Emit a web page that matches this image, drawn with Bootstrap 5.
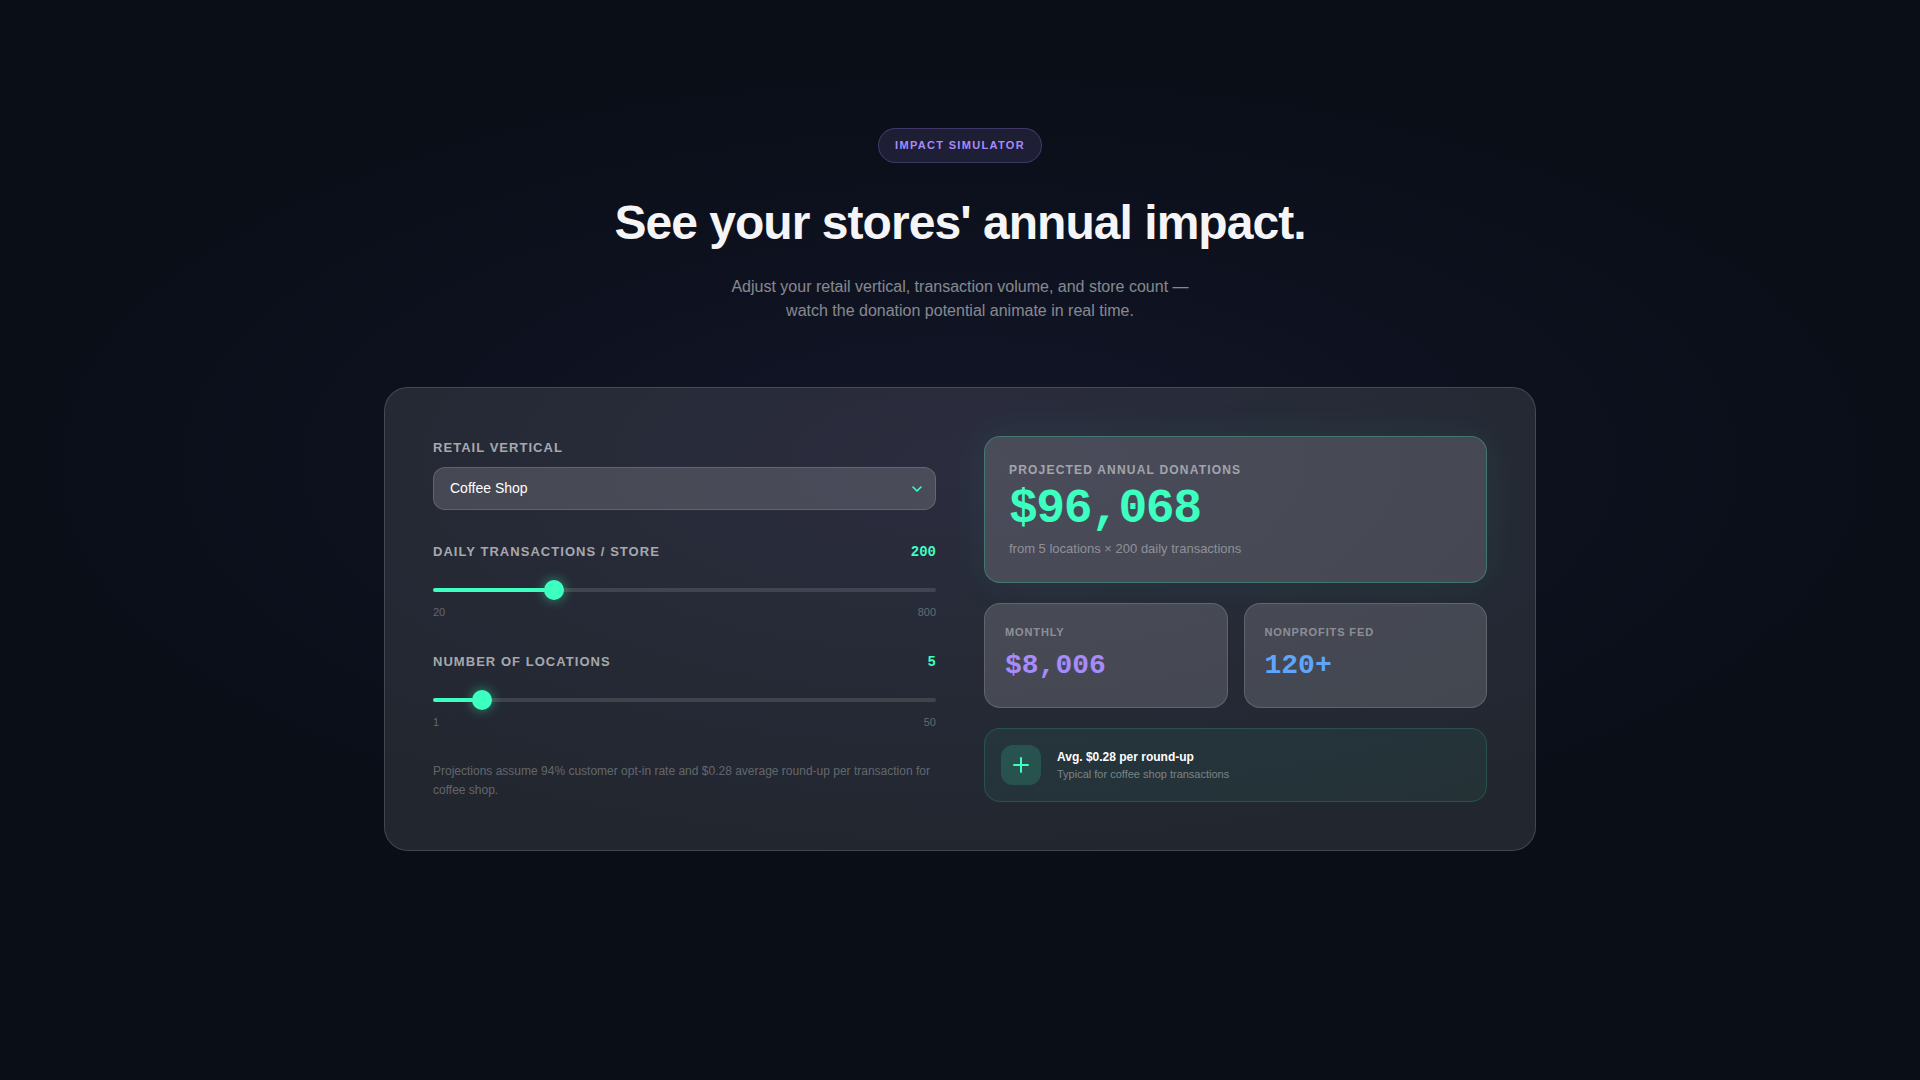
<!DOCTYPE html>
<html lang="en">
<head>
<meta charset="utf-8">
<meta name="viewport" content="width=device-width, initial-scale=1">
<title>Impact Simulator</title>
<link href="https://cdn.jsdelivr.net/npm/bootstrap@5.3.0/dist/css/bootstrap.min.css" rel="stylesheet">
<style>
:root { --mint: #3dffc0; --violet: #a78bfa; --sky: #60a5fa; }
body {
  font-family: "Liberation Sans", Arial, sans-serif;
  color: #f5f5f7;
  background: #090e17;
}
.sim-section {
  padding: 128px 24px;
  background: radial-gradient(ellipse 50% 38% at 50% 43%, rgba(139,115,250,.08), transparent 100%);
}
.mono { font-family: "Liberation Mono", "Courier New", monospace; font-weight: 700; }
.pill {
  font-size: 11px; line-height: 17px; font-weight: 700; letter-spacing: 1.32px;
  padding: 8px 16px; color: var(--violet);
  background: rgba(167,139,250,.12); border: 1px solid rgba(167,139,250,.25);
}
.headline { font-size: 48px; line-height: 56px; font-weight: 700; letter-spacing: -0.96px; }
.intro { font-size: 16px; line-height: 24px; max-width: 480px; color: rgba(255,255,255,.5); }
.panel {
  max-width: 1152px; padding: 48px; border-radius: 24px;
  background: rgba(255,255,255,.1); border: 1px solid rgba(255,255,255,.15);
}
.split { --bs-gutter-x: 48px; --bs-gutter-y: 48px; }
.field-label { font-size: 13px; line-height: 20px; font-weight: 700; letter-spacing: 1.04px; color: rgba(255,255,255,.6); }
.field-value { font-size: 14px; line-height: 20px; color: var(--mint); }
.select-label { margin-bottom: 9px; }
.slider-head { margin-bottom: 18px; }
.glass-select, .glass-select:focus {
  height: 43px; padding: 0 40px 0 16px; font-size: 14px; color: #fff; border-radius: 12px;
  border: 1px solid rgba(255,255,255,.15); background-color: rgba(255,255,255,.15);
  background-image: url("data:image/svg+xml,%3Csvg xmlns='http://www.w3.org/2000/svg' viewBox='0 0 12 8'%3E%3Cpath d='M2 2l4 4 4-4' fill='none' stroke='%233dffc0' stroke-width='1.6' stroke-linecap='round' stroke-linejoin='round'/%3E%3C/svg%3E");
  background-size: 12px 8px; background-position: right 12px center;
}
.glass-select option { color: #111; }
.slider { display: block; height: 20px; }
.slider::-webkit-slider-runnable-track {
  height: 4px; border-radius: 2px;
  background: linear-gradient(to right, var(--mint) var(--fill), rgba(255,255,255,.12) var(--fill));
}
.slider::-webkit-slider-thumb, .slider:focus::-webkit-slider-thumb {
  width: 20px; height: 20px; margin-top: -8px; background: var(--mint);
  box-shadow: 0 0 12px rgba(61,255,192,.5);
}
.slider::-moz-range-track { height: 4px; background: rgba(255,255,255,.12); }
.slider::-moz-range-progress { height: 4px; background: var(--mint); }
.slider::-moz-range-thumb { width: 20px; height: 20px; background: var(--mint); }
.bounds { font-size: 11px; line-height: 16px; color: rgba(255,255,255,.3); }
.footnote { font-size: 12px; line-height: 19px; color: rgba(255,255,255,.3); }
.glass-tile { border-radius: 16px; background: rgba(255,255,255,.15); border: 1px solid rgba(255,255,255,.15); }
.hero-tile { padding: 24px; border-color: rgba(61,255,192,.25); box-shadow: 0 0 40px rgba(61,255,192,.07); }
.hero-label { font-size: 12px; line-height: 18px; font-weight: 700; letter-spacing: 1.2px; color: rgba(255,255,255,.5); }
.hero-number { font-size: 48px; line-height: 52px; letter-spacing: -1.44px; color: var(--mint); }
.hero-sub { font-size: 13px; line-height: 19px; color: rgba(255,255,255,.4); }
.mini-tile { padding: 20px; }
.mini-label { font-size: 11px; line-height: 16px; font-weight: 700; letter-spacing: .88px; color: rgba(255,255,255,.4); }
.mini-number { font-size: 28px; line-height: 43px; }
.tip { border-radius: 16px; background: rgba(61,255,192,.06); border: 1px solid rgba(61,255,192,.15); }
.tip-icon { width: 40px; height: 40px; border-radius: 12px; background: rgba(61,255,192,.15); }
.tip-title { font-size: 12px; line-height: 18px; font-weight: 700; color: #fff; }
.tip-sub { font-size: 11px; line-height: 16px; color: rgba(255,255,255,.4); }
</style>
<script src="https://cdn.jsdelivr.net/npm/bootstrap@5.3.0/dist/js/bootstrap.bundle.min.js"></script>
</head>
<body>
<main class="sim-section min-vh-100 d-flex flex-column align-items-center">
  <header class="d-flex flex-column align-items-center text-center gap-4 mb-5 pb-3">
    <span class="pill rounded-pill">IMPACT SIMULATOR</span>
    <h1 class="headline m-0 pt-2">See your stores' annual impact.</h1>
    <p class="intro m-0">Adjust your retail vertical, transaction volume, and store count — watch the donation potential animate in real time.</p>
  </header>

  <section class="panel w-100">
    <div class="row split align-items-center">
      <form class="col-lg-6">
        <div class="mb-4 pb-2">
          <label class="field-label select-label d-block" for="vertical">RETAIL VERTICAL</label>
          <select class="form-select glass-select" id="vertical">
            <option selected>Coffee Shop</option>
            <option>Grocery</option>
            <option>Convenience</option>
          </select>
        </div>
        <div class="mb-4 pb-2">
          <div class="slider-head d-flex justify-content-between align-items-center">
            <label class="field-label" for="daily">DAILY TRANSACTIONS / STORE</label>
            <output class="field-value mono" for="daily">200</output>
          </div>
          <input class="form-range slider" type="range" id="daily" min="20" max="800" value="200" style="--fill: 23.08%">
          <div class="bounds d-flex justify-content-between mt-1"><span>20</span><span>800</span></div>
        </div>
        <div class="mb-4 pb-2">
          <div class="slider-head d-flex justify-content-between align-items-center">
            <label class="field-label" for="places">NUMBER OF LOCATIONS</label>
            <output class="field-value mono" for="places">5</output>
          </div>
          <input class="form-range slider" type="range" id="places" min="1" max="50" value="5" style="--fill: 8.16%">
          <div class="bounds d-flex justify-content-between mt-1"><span>1</span><span>50</span></div>
        </div>
        <p class="footnote m-0">Projections assume 94% customer opt-in rate and $0.28 average round-up per transaction for coffee shop.</p>
      </form>

      <div class="col-lg-6">
        <div class="glass-tile hero-tile">
          <div class="hero-label">PROJECTED ANNUAL DONATIONS</div>
          <div class="hero-number mono my-1">$96,068</div>
          <div class="hero-sub">from 5 locations × 200 daily transactions</div>
        </div>
        <div class="row gx-3 my-0 py-1">
          <div class="col-6 py-3">
            <div class="glass-tile mini-tile">
              <div class="mini-label mb-1">MONTHLY</div>
              <div class="mini-number mono" style="color: var(--violet)">$8,006</div>
            </div>
          </div>
          <div class="col-6 py-3">
            <div class="glass-tile mini-tile">
              <div class="mini-label mb-1">NONPROFITS FED</div>
              <div class="mini-number mono" style="color: var(--sky)">120+</div>
            </div>
          </div>
        </div>
        <div class="tip d-flex align-items-center gap-3 p-3">
          <div class="tip-icon d-flex align-items-center justify-content-center flex-shrink-0">
            <svg width="20" height="20" viewBox="0 0 20 20" fill="none" stroke="#3dffc0" stroke-width="2" stroke-linecap="round" aria-hidden="true"><path d="M10 3v14M3 10h14"/></svg>
          </div>
          <div>
            <div class="tip-title">Avg. $0.28 per round-up</div>
            <div class="tip-sub">Typical for coffee shop transactions</div>
          </div>
        </div>
      </div>
    </div>
  </section>
</main>
</body>
</html>
